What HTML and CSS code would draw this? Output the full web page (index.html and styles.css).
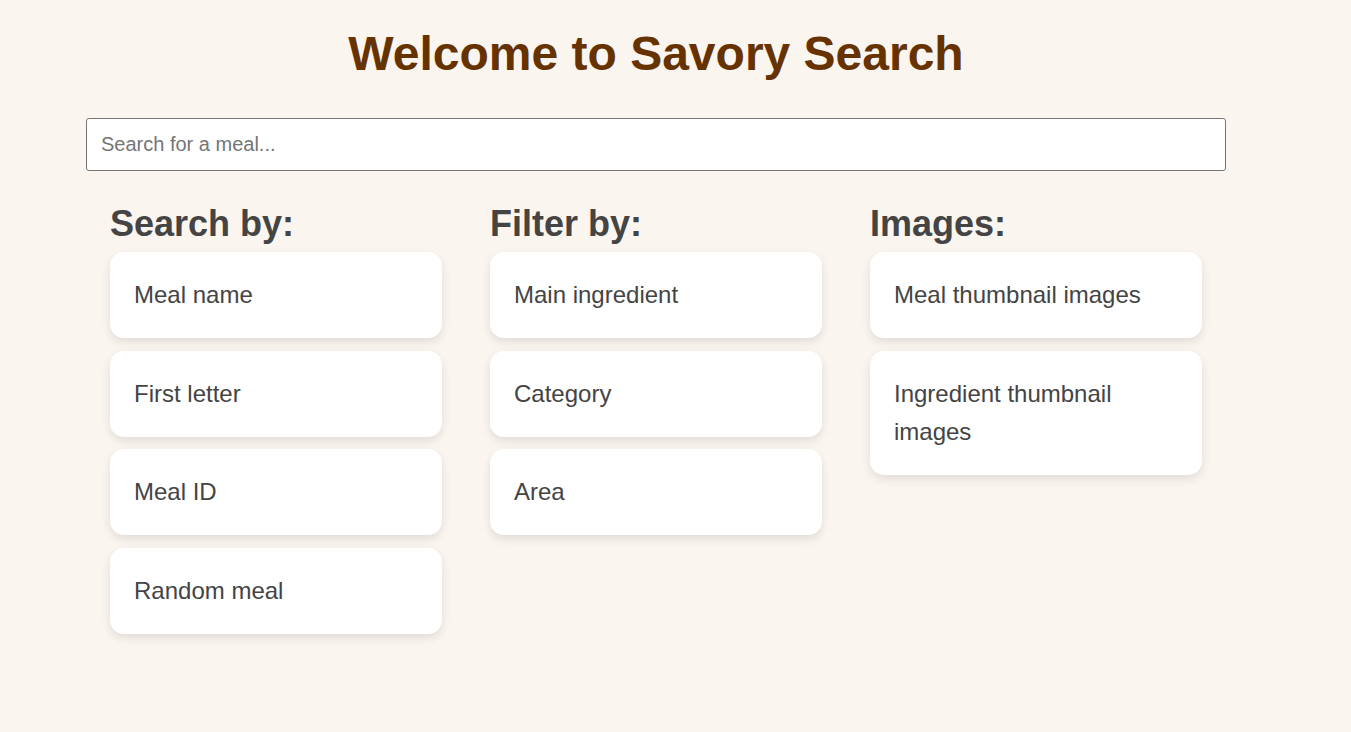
FILE: index.html
```html
<!DOCTYPE html>
<html lang="en">
<head>
<meta charset="utf-8">
<title>Savory Search</title>
<link rel="stylesheet" href="styles.css">
</head>
<body>
<div class="container">
  <h1 class="title">Welcome to Savory Search</h1>
  <input class="search" type="text" placeholder="Search for a meal...">
  <div class="columns">
    <section class="column">
      <h2 class="column-title">Search by:</h2>
      <div class="card">Meal name</div>
      <div class="card">First letter</div>
      <div class="card">Meal ID</div>
      <div class="card">Random meal</div>
    </section>
    <section class="column">
      <h2 class="column-title">Filter by:</h2>
      <div class="card">Main ingredient</div>
      <div class="card">Category</div>
      <div class="card">Area</div>
    </section>
    <section class="column">
      <h2 class="column-title">Images:</h2>
      <div class="card">Meal thumbnail images</div>
      <div class="card">Ingredient thumbnail images</div>
    </section>
  </div>
</div>
</body>
</html>
```
FILE: styles.css
```css
html, body {
  margin: 0;
  padding: 0;
  background: #faf5ef;
}
body {
  font-family: "Liberation Sans", Arial, sans-serif;
  color: #444;
}
.container {
  width: 1140px;
  margin-left: 86px;
  padding-top: 24px;
}
.title {
  margin: 0;
  text-align: center;
  font-size: 48px;
  line-height: 60px;
  font-weight: bold;
  color: #663300;
}
.search {
  display: block;
  box-sizing: border-box;
  width: 1140px;
  height: 53px;
  margin-top: 34px;
  padding: 0 14px;
  border: 1px solid #767676;
  border-radius: 3px;
  background: #fff;
  font-family: "Liberation Sans", Arial, sans-serif;
  font-size: 20px;
  color: #333;
}
.search::placeholder {
  color: #757575;
}
.columns {
  display: grid;
  grid-template-columns: repeat(3, 332px);
  column-gap: 48px;
  padding: 0 24px;
  margin-top: 32px;
}
.column-title {
  margin: 0 0 7px;
  font-size: 36px;
  line-height: 42px;
  font-weight: bold;
  color: #444;
}
.card {
  background: #fff;
  border-radius: 14px;
  padding: 24px;
  font-size: 24px;
  line-height: 38px;
  color: #444;
  box-shadow: 0 4px 10px rgba(0, 0, 0, 0.1);
  margin-bottom: 12.67px;
}
```
